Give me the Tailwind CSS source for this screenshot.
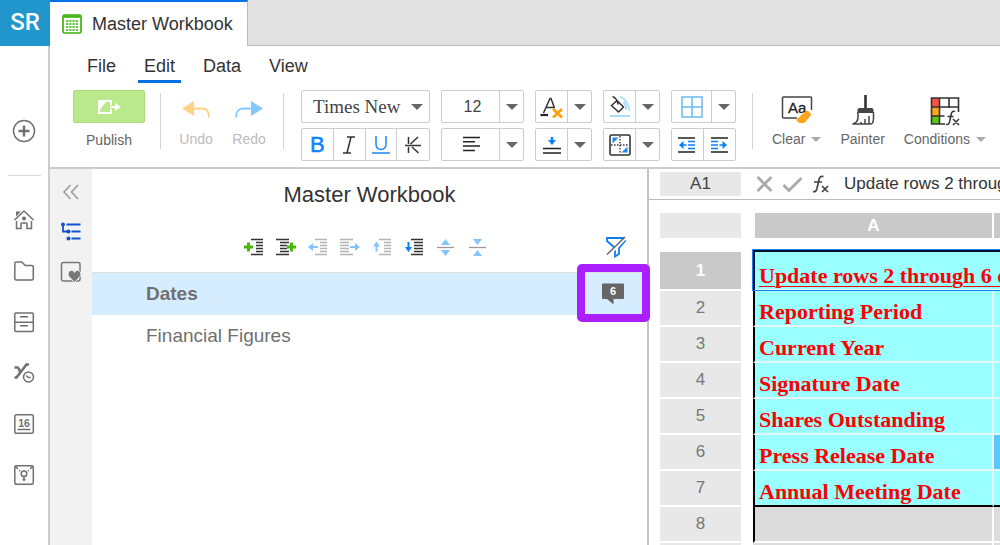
<!DOCTYPE html>
<html lang="en">
<head>
    <meta charset="utf-8">
    <meta name="viewport" content="width=device-width, initial-scale=1">
    <title>Master Workbook</title>
    <script src="https://cdn.jsdelivr.net/npm/@tailwindcss/browser@4"></script>
</head>
<body class="flex h-screen overflow-hidden bg-white font-['Liberation_Sans',Arial,sans-serif] text-[#333]">

<!-- App sidebar -->
<aside class="flex w-[50px] shrink-0 flex-col">
    <a href="#" class="flex h-[46px] shrink-0 items-center justify-center bg-[#2196cc] pb-0.5 font-['Roboto',sans-serif] text-2xl font-medium text-white">SR</a>
    <nav class="flex grow flex-col items-center border-r-2 border-[#ccc] pt-[73px] text-[#707070]">
        <button aria-label="Create">
            <svg class="size-6" viewBox="0 0 24 24" fill="none" stroke="currentColor"><circle cx="12" cy="12" r="10.5" stroke-width="1.5"/><path d="M12 6.5v11M6.5 12h11" stroke-width="2.5"/></svg>
        </button>
        <hr class="mt-8 w-[33px] border-[#d8d8d8]">
        <div class="mt-8 flex flex-col gap-[27px]">
            <button aria-label="Home">
                <svg class="size-6" viewBox="0 0 24 24" fill="none" stroke="currentColor" stroke-width="1.5"><path d="M2.500 12L12 3l9.500 9M4.500 13v7.500h4.500V16q0-1 1-1h4q1 0 1 1v4.500h4.500V13"/><path d="M4 3.500h5L4 8.500z" fill="currentColor" stroke="none"/><circle cx="12" cy="10.500" r="2" fill="currentColor" stroke="none"/></svg>
            </button>
            <button aria-label="Files">
                <svg class="size-6" viewBox="0 0 24 24" fill="none" stroke="currentColor" stroke-width="1.5"><path d="M2.800 4.500a1.500 1.500 0 0 1 1.500-1.500h5.500l3.500 3.500h6.500a1.500 1.500 0 0 1 1.500 1.500v11.500a1.500 1.500 0 0 1-1.500 1.500h-15.500a1.500 1.500 0 0 1-1.500-1.500z"/></svg>
            </button>
            <button aria-label="Archive">
                <svg class="size-6" viewBox="0 0 24 24" fill="none" stroke="currentColor" stroke-width="1.5"><rect x="2.800" y="3" width="18.500" height="18.500" rx="1"/><path d="M2.800 12.200h18.500M8 6.700h8M8 15.800h8"/></svg>
            </button>
            <button aria-label="Processes">
                <svg class="size-6" viewBox="0 0 24 24" fill="none" stroke="currentColor"><path d="M2.500 6.500h2.500q2 0 3 4.500M2.500 16.500h2L14.500 3.500h2.500" stroke-width="2.600"/><circle cx="16.500" cy="16" r="5" fill="white" stroke-width="1.500"/><path d="M14 14.500l2.500 2h2" stroke-width="1.500"/></svg>
            </button>
            <button aria-label="Calendar">
                <svg class="size-6" viewBox="0 0 24 24" fill="none" stroke="currentColor" stroke-width="1.5"><rect x="2.800" y="2.800" width="18.500" height="18.500" rx="1.500"/><path d="M5.500 17.500h13"/><text x="12" y="14.500" text-anchor="middle" font-size="10.500" font-weight="700" fill="currentColor" stroke="none">16</text></svg>
            </button>
            <button aria-label="Ideas">
                <svg class="size-6" viewBox="0 0 24 24" fill="none" stroke="currentColor" stroke-width="1.5"><rect x="2.800" y="2.800" width="18.500" height="18.500" rx="1.500"/><path d="M3 3l3 3M7.200 7.200l1 1M21 3l-3 3M16.800 7.200l-1 1M12 13.500v4.500M10.500 16.500h3"/><circle cx="12" cy="10.700" r="2.800"/></svg>
            </button>
        </div>
    </nav>
</aside>

<div class="flex min-w-0 grow flex-col">
    <!-- Document tabs -->
    <header class="flex h-[46px] shrink-0">
        <div class="flex w-[198px] items-center gap-[10px] border-t-2 border-r border-t-[#0070e8] border-r-[#bbb] pl-3">
            <svg class="h-5 w-5" viewBox="0 0 20 20"><rect x="1" y="1" width="18" height="18" rx="1.500" fill="white" stroke="#3fb40c" stroke-width="1.700"/><path d="M1 2.500h18" stroke="#3fb40c" stroke-width="2.500"/><path d="M4 7h12M4 10h12M4 13h12M4 16h12" stroke="#3fb40c" stroke-width="1.600" stroke-dasharray="2.400 .8"/></svg>
            <span class="text-lg whitespace-nowrap">Master Workbook</span>
        </div>
        <div class="grow border-b border-[#bbb] bg-[#e1e1e1]"></div>
    </header>

    <!-- Menu -->
    <nav class="flex shrink-0 gap-4 pt-[7px] pl-[31px] text-lg leading-[26px]">
        <button class="border-b-3 border-transparent px-1.5 pb-px">File</button>
        <button class="border-b-3 border-[#0070e0] px-1.5 pb-px">Edit</button>
        <button class="border-b-3 border-transparent px-1.5 pb-px">Data</button>
        <button class="border-b-3 border-transparent px-1.5 pb-px">View</button>
    </nav>

    <!-- Ribbon -->
    <div class="flex h-[86px] shrink-0 overflow-hidden border-b-2 border-[#ccc] pt-[7px] pl-[23px] text-sm text-[#666]">
        <button class="flex w-[72px] shrink-0 flex-col items-center">
            <span class="flex h-[33px] w-full items-center justify-center rounded-xs border border-[#a9dd79] bg-[#bae88d]">
                <svg class="h-4 w-6" viewBox="0 0 24 16"><rect x="2" y="2" width="12" height="12" fill="none" stroke="white" stroke-width="2"/><path d="M2 14V2h9Q4.500 6 2 14z" fill="white"/><path d="M11 8h8" stroke="#bae88d" stroke-width="4"/><path d="M13 8h6" stroke="white" stroke-width="2"/><path d="M18 4L24 8l-6 4z" fill="white"/></svg>
            </span>
            <span class="mt-[7px]">Publish</span>
        </button>
        <div class="mt-[3px] mr-[17px] ml-[15px] h-14 w-px shrink-0 bg-[#d4d4d4]"></div>
        <button disabled class="flex w-9 shrink-0 flex-col items-center text-[#bbb]">
            <svg class="mt-[10px] h-5 w-[30px]" viewBox="0 0 30 20"><path d="M13 1v15L1 8.500z" fill="#ffd285"/><path d="M12 8.500h9q7 0 7 9" fill="none" stroke="#ffd285" stroke-width="1.800"/></svg>
            <span class="mt-[9px]">Undo</span>
        </button>
        <button disabled class="ml-[17px] flex w-9 shrink-0 flex-col items-center text-[#bbb]">
            <svg class="mt-[10px] h-5 w-[30px]" viewBox="0 0 30 20"><path d="M17 1v15l12-7.500z" fill="#85c8ff"/><path d="M18 8.500H9q-7 0-7 9" fill="none" stroke="#85c8ff" stroke-width="1.800"/></svg>
            <span class="mt-[9px]">Redo</span>
        </button>
        <div class="mt-[3px] mr-[17px] ml-4 h-14 w-px shrink-0 bg-[#d4d4d4]"></div>

        <div class="grid shrink-0 auto-rows-[33px] grid-cols-[129px_83px_57px_57px_65px] gap-x-[11px] gap-y-[5px]">
            <div class="relative flex rounded-xs border border-[#ccc]">
                <select aria-label="Font" class="w-full appearance-none pl-[11px] font-['Liberation_Serif',serif] text-[19px] leading-7 text-[#444]"><option>Times New</option></select>
                <svg class="pointer-events-none absolute top-[13px] right-[6px] h-1.5 w-3" viewBox="0 0 12 6"><path d="M0 0h12L6 6z" fill="#666"/></svg>
            </div>
            <div class="flex rounded-xs border border-[#ccc]">
                <input aria-label="Font size" value="12" class="w-0 grow pl-1 text-center text-base text-[#444]">
                <button aria-label="Font sizes" class="flex w-6 items-center justify-center border-l border-[#ccc]"><svg class="h-1.5 w-3" viewBox="0 0 12 6"><path d="M0 0h12L6 6z" fill="#666"/></svg></button>
            </div>
            <div class="flex rounded-xs border border-[#ccc]">
                <button aria-label="Text color" class="flex grow items-center justify-center"><svg class="h-6 w-6" viewBox="0 0 24 24" fill="none"><path d="M3.500 18L10 3.500h1L14.500 13M6 12.500h8" stroke="#333" stroke-width="1.500"/><path d="M.500 20h7.500" stroke="#222" stroke-width="2.200"/><path d="M13 14l9 8.500M22 14l-9 8.500" stroke="#ffa011" stroke-width="2.800"/></svg></button>
                <button aria-label="Text colors" class="flex w-6 items-center justify-center border-l border-[#ccc]"><svg class="h-1.5 w-3" viewBox="0 0 12 6"><path d="M0 0h12L6 6z" fill="#666"/></svg></button>
            </div>
            <div class="flex rounded-xs border border-[#ccc]">
                <button aria-label="Fill color" class="flex grow items-center justify-center"><svg class="h-6 w-6" viewBox="0 0 24 24" fill="none"><path d="M4.500 1.500q4.500 1.500 5.500 8M9 5.500l6.500 6.500-5 5L3.500 10.500z" stroke="#333" stroke-width="1.500"/><path d="M12 1.500q8 3 9.500 14.500M15.500 7q3 3 2.500 8" stroke="#a8dcf8" stroke-width="1.800"/><path d="M2 21h20" stroke="#a8dcf8" stroke-width="2"/></svg></button>
                <button aria-label="Fill colors" class="flex w-6 items-center justify-center border-l border-[#ccc]"><svg class="h-1.5 w-3" viewBox="0 0 12 6"><path d="M0 0h12L6 6z" fill="#666"/></svg></button>
            </div>
            <div class="flex rounded-xs border border-[#ccc]">
                <button aria-label="Borders" class="flex grow items-center justify-center"><svg class="h-6 w-6" viewBox="0 0 24 24" fill="none" stroke="#67bcf5" stroke-width="1.500"><path d="M2 2h20v20H2zM12 2v20M2 12h20"/></svg></button>
                <button aria-label="Border styles" class="flex w-6 items-center justify-center border-l border-[#ccc]"><svg class="h-1.5 w-3" viewBox="0 0 12 6"><path d="M0 0h12L6 6z" fill="#666"/></svg></button>
            </div>

            <div class="grid grid-cols-4 divide-x divide-[#ccc] rounded-xs border border-[#ccc] text-[#333]">
                <button aria-label="Bold" class="text-[22px] leading-none text-[#0a84ff] [-webkit-text-stroke:0.5px_#0a84ff]">B</button>
                <button aria-label="Italic" class="flex items-center justify-center"><svg class="h-5 w-4" viewBox="0 0 16 20" fill="none" stroke="currentColor" stroke-width="1.500"><path d="M6 2h8M2 18h8M10 2L6 18"/></svg></button>
                <button aria-label="Underline" class="flex items-center justify-center text-[#1a86f5]"><svg class="h-5 w-5" viewBox="0 0 20 20" fill="none" stroke="currentColor" stroke-width="1.500"><path d="M5 1v8.500a5 5 0 0 0 10 0V1M1 18h18"/></svg></button>
                <button aria-label="Strikethrough" class="flex items-center justify-center"><svg class="h-5 w-5" viewBox="0 0 20 20" fill="none" stroke="currentColor" stroke-width="1.500"><path d="M2 10.500h16M5.500 2v7M15 2L7.500 9M5.500 12v6M9 12l6.500 6"/></svg></button>
            </div>
            <div class="flex rounded-xs border border-[#ccc]">
                <button aria-label="Align left" class="flex grow items-center justify-center"><svg class="h-5 w-5" viewBox="0 0 20 20" stroke="#222" stroke-width="1.500"><path d="M2 2.500h17M2 6.800h12M2 11h17M2 15.500h12"/></svg></button>
                <button aria-label="Alignments" class="flex w-6 items-center justify-center border-l border-[#ccc]"><svg class="h-1.5 w-3" viewBox="0 0 12 6"><path d="M0 0h12L6 6z" fill="#666"/></svg></button>
            </div>
            <div class="flex rounded-xs border border-[#ccc]">
                <button aria-label="Vertical align" class="flex grow items-center justify-center"><svg class="h-5 w-5" viewBox="0 0 20 20" fill="none"><path d="M1 13.500h18M1 18h18" stroke="#222" stroke-width="1.500"/><path d="M10 2v4" stroke="#0a80f8" stroke-width="2.500"/><path d="M6 5h8l-4 5z" fill="#0a80f8"/></svg></button>
                <button aria-label="Vertical alignments" class="flex w-6 items-center justify-center border-l border-[#ccc]"><svg class="h-1.5 w-3" viewBox="0 0 12 6"><path d="M0 0h12L6 6z" fill="#666"/></svg></button>
            </div>
            <div class="flex rounded-xs border border-[#ccc]">
                <button aria-label="Merge cells" class="flex grow items-center justify-center"><svg class="h-6 w-6" viewBox="0 0 24 24" fill="none"><rect x="2" y="2" width="20" height="20" rx="1.500" stroke="#333" stroke-width="1.600"/><path d="M12 3v18M3 12h18" stroke="#333" stroke-width="1.300" stroke-dasharray="1.500 1.500"/><path d="M4.500 4.500h6l-6 6zM19.500 19.500h-6l6-6z" fill="#1a88f5"/></svg></button>
                <button aria-label="Merge options" class="flex w-6 items-center justify-center border-l border-[#ccc]"><svg class="h-1.5 w-3" viewBox="0 0 12 6"><path d="M0 0h12L6 6z" fill="#666"/></svg></button>
            </div>
            <div class="grid grid-cols-2 divide-x divide-[#ccc] rounded-xs border border-[#ccc]">
                <button aria-label="Decrease indent" class="flex items-center justify-center"><svg class="h-5 w-5" viewBox="0 0 20 20" fill="none"><path d="M1 3h17M1 17h17" stroke="#222" stroke-width="1.500"/><path d="M11 6.500h7M11 10h7M11 13.500h7M5 10h4.500" stroke="#0a80f8" stroke-width="1.700"/><path d="M6.500 6v8L2 10z" fill="#0a80f8"/></svg></button>
                <button aria-label="Increase indent" class="flex items-center justify-center"><svg class="h-5 w-5" viewBox="0 0 20 20" fill="none"><path d="M2 3h17M2 17h17" stroke="#222" stroke-width="1.500"/><path d="M2 6.500h7M2 10h7M2 13.500h7M10.500 10h4.500" stroke="#0a80f8" stroke-width="1.700"/><path d="M13.500 6v8l4.500-4z" fill="#0a80f8"/></svg></button>
            </div>
        </div>

        <div class="mt-[3px] mr-[19px] ml-4 h-14 w-px shrink-0 bg-[#d4d4d4]"></div>
        <div class="flex shrink-0 items-start gap-[19px]">
            <button class="flex flex-col items-center">
                <svg class="mt-1 h-8 w-8" viewBox="0 0 32 32" fill="none"><path d="M16 24H2.500a1 1 0 0 1-1-1V4a1 1 0 0 1 1-1h27a1 1 0 0 1 1 1v12" stroke="#444" stroke-width="1.500"/><text x="7" y="19" font-size="15" fill="#222" stroke="#222" stroke-width=".3">Aa</text><path d="M16 25l9-8q1-1 2 0l3.500 3.500-7 8.500h-5q-4-2-2.500-4z" fill="#ffa51c"/></svg>
                <span class="mt-[3px] flex items-center gap-1.5">Clear <svg class="h-[5px] w-[10px]" viewBox="0 0 12 6"><path d="M0 0h12L6 6z" fill="#aaa"/></svg></span>
            </button>
            <button class="flex flex-col items-center">
                <svg class="mt-1 h-8 w-8" viewBox="0 0 32 32" fill="none"><path d="M18.500 1v14" stroke="#333" stroke-width="2.600"/><path d="M10.500 19v-3q0-2 2-2h12q2 0 2 2v3z" fill="#444"/><path d="M11 18v5q0 6-5.500 7h18q3 0 3-6v-6M14 30v-2M18 30v-5M22 30v-8" stroke="#444" stroke-width="1.500"/></svg>
                <span class="mt-[3px]">Painter</span>
            </button>
            <button class="flex flex-col items-center">
                <svg class="mt-1 h-8 w-8" viewBox="0 0 32 32" fill="none"><path d="M2.500 4h8v9h-8z" fill="#ff5048"/><path d="M2.500 13h8v9h-8z" fill="#ffa51c"/><path d="M2.500 22h8v8h-8z" fill="#5ac810"/><path d="M16 30H2.500V4h27v14M10.500 4v26M20 4v10M2.500 13h27M2.500 22h13" stroke="#333" stroke-width="1.600"/><path d="M17 30q3 2 4-4l1-5q1-5 4-3.500M18.500 22.500h6M24 25l6 6M30 25l-6 6" stroke="#333" stroke-width="1.500"/></svg>
                <span class="mt-[3px] flex items-center gap-1.5">Conditions <svg class="h-[5px] w-[10px]" viewBox="0 0 12 6"><path d="M0 0h12L6 6z" fill="#aaa"/></svg></span>
            </button>
        </div>
    </div>

    <div class="flex min-h-0 grow">
        <!-- Panel switcher -->
        <div class="flex w-[42px] shrink-0 flex-col items-center gap-4 bg-[#f2f2f2] pt-[11px]">
            <button aria-label="Collapse panel"><svg class="size-6" viewBox="0 0 24 24" fill="none" stroke="#999" stroke-width="1.500"><path d="M11.500 5L5 12l6.500 7M19 5l-6.500 7 6.500 7"/></svg></button>
            <button aria-label="Outline"><svg class="size-6" viewBox="0 0 24 24" fill="none" stroke="#1150d0" stroke-width="1.800"><path d="M7.500 4.500h14M12.500 11.500h9M12.500 18.500h9M4 4.500v7h4"/><g fill="#1150d0" stroke="none"><circle cx="4" cy="4.500" r="2"/><circle cx="9.500" cy="11.500" r="2"/><circle cx="9.500" cy="18.500" r="2"/></g></svg></button>
            <button aria-label="Favorites"><svg class="size-6" viewBox="0 0 24 24"><rect x="2.500" y="2.500" width="18.500" height="18.500" rx="2" fill="none" stroke="#777" stroke-width="1.500"/><path d="M15.500 22.500l-5.500-6c-2.500-3 .5-7 3.500-6q1.500.5 2 2 .5-1.500 2-2c3-1 6 3 3.500 6z" fill="#777" stroke="#f2f2f2"/></svg></button>
        </div>

        <!-- Outline -->
        <section class="flex w-[557px] shrink-0 flex-col border-r-2 border-[#c4c4c4]">
            <h1 class="pt-[11px] text-center text-[22px] leading-[30px]">Master Workbook</h1>
            <div class="mt-[25px] flex h-6 items-center pr-[19px] pl-[152px]">
                <div class="flex gap-3">
                    <button aria-label="Insert before"><svg class="size-5" viewBox="0 0 20 20" fill="none"><path d="M7 2.500h12M12 5.500h7M12 8.500h7M12 11.500h7M12 14.500h7M7 17.500h12" stroke="#333" stroke-width="1.500"/><path d="M0 10h9M4.500 5.500v9" stroke="#45b80a" stroke-width="3"/></svg></button>
                    <button aria-label="Insert after"><svg class="size-5" viewBox="0 0 20 20" fill="none"><path d="M0 2.500h13M4 5.500h9M4 8.500h7M4 11.500h7M4 14.500h9M0 17.500h13" stroke="#333" stroke-width="1.500"/><path d="M11 10h9M15.500 5.500v9" stroke="#45b80a" stroke-width="3"/></svg></button>
                    <button disabled aria-label="Promote"><svg class="size-5" viewBox="0 0 20 20" fill="none"><path d="M7 2.500h12M12 5.500h7M12 8.500h7M12 11.500h7M12 14.500h7M7 17.500h12" stroke="#b5b5b5" stroke-width="1.500"/><path d="M3 10h7" stroke="#80c5ff" stroke-width="2"/><path d="M5 6v8l-5-4z" fill="#80c5ff"/></svg></button>
                    <button disabled aria-label="Demote"><svg class="size-5" viewBox="0 0 20 20" fill="none"><path d="M0 2.500h13M0 5.500h9M0 8.500h9M0 11.500h9M0 14.500h9M0 17.500h13" stroke="#b5b5b5" stroke-width="1.500"/><path d="M10 10h7" stroke="#80c5ff" stroke-width="2"/><path d="M15 6v8l5-4z" fill="#80c5ff"/></svg></button>
                    <button disabled aria-label="Move up"><svg class="size-5" viewBox="0 0 20 20" fill="none"><path d="M7 2.500h12M12 5.500h7M12 8.500h7M12 11.500h7M12 14.500h7M7 17.500h12" stroke="#b5b5b5" stroke-width="1.500"/><path d="M4.500 8v6.500" stroke="#80c5ff" stroke-width="2"/><path d="M1 9.500h7l-3.500-5z" fill="#80c5ff"/></svg></button>
                    <button aria-label="Move down"><svg class="size-5" viewBox="0 0 20 20" fill="none"><path d="M7 2.500h12M10 5.500h9M10 8.500h9M10 11.500h9M10 14.500h9M7 17.500h12" stroke="#333" stroke-width="1.500"/><path d="M4.500 5v6" stroke="#0a80f8" stroke-width="2"/><path d="M1 10h7l-3.500 5z" fill="#0a80f8"/></svg></button>
                    <button disabled aria-label="Expand all"><svg class="size-5" viewBox="0 0 20 20"><path d="M1 10.500h17" stroke="#999" stroke-width="1.300"/><path d="M5 8h9L9.500 2zM5 13h9l-4.500 6z" fill="#80c5ff"/></svg></button>
                    <button disabled aria-label="Collapse all"><svg class="size-5" viewBox="0 0 20 20"><path d="M1 10.500h17" stroke="#999" stroke-width="1.300"/><path d="M5 2h9L9.500 8zM5 19h9l-4.500-6z" fill="#80c5ff"/></svg></button>
                </div>
                <button aria-label="Clear filter" class="ml-auto"><svg class="size-6" viewBox="0 0 24 24" fill="none"><path d="M3 3h18v3l-6 7v6l-4 2.500V13L3 6z" stroke="#0a80f0" stroke-width="1.800"/><path d="M4.500 20.500L22 2.500" stroke="white" stroke-width="2.500"/><path d="M3 19.500L21 2" stroke="#666" stroke-width="1.500"/></svg></button>
            </div>
            <ul class="mt-[13px] text-[19px] text-[#707070]">
                <li class="relative flex h-[43px] items-center justify-between border-t border-[#ddd] bg-[#d5edfe] pr-[22px] pl-[54px]">
                    <a href="#" class="font-bold">Dates</a>
                    <button aria-label="6 comments"><svg class="size-6" viewBox="0 0 24 24"><path d="M2 1.500h20q1 0 1 1V16q0 1-1 1H12.500v5.500L6 17H2q-1 0-1-1V2.500q0-1 1-1z" fill="#666"/><text x="12" y="13" text-anchor="middle" font-size="11" font-weight="700" fill="white">6</text></svg></button>
                    <span class="pointer-events-none absolute -top-[9px] -right-[3px] z-10 h-[58px] w-[73px] rounded-[5px] border-8 border-[#ab1fff]"></span>
                </li>
                <li class="flex h-[42px] items-center pl-[54px]"><a href="#">Financial Figures</a></li>
            </ul>
        </section>

        <!-- Sheet -->
        <main class="flex min-w-0 grow flex-col overflow-hidden">
            <div class="flex h-[31px] shrink-0 items-center border-b border-[#bbb] pl-[11px]">
                <input aria-label="Cell" value="A1" class="h-6 w-[81px] shrink-0 rounded-xs bg-[#e8e8e8] text-center text-[17px] text-[#444]">
                <button aria-label="Cancel" class="ml-3 shrink-0"><svg class="size-6" viewBox="0 0 24 24"><path d="M4.500 5l14 14M18.500 5l-14 14" stroke="#aaa" stroke-width="2.800"/></svg></button>
                <button aria-label="Accept" class="ml-1 shrink-0"><svg class="size-6" viewBox="0 0 24 24" fill="none"><path d="M2.500 13l5.500 5.500L20.500 6" stroke="#aaa" stroke-width="2.800"/></svg></button>
                <button aria-label="Insert function" class="ml-1 shrink-0"><svg class="size-6" viewBox="0 0 24 24" fill="none" stroke="#444" stroke-width="1.700"><path d="M4 19.500q3 1 4-3l2-9q1-4 4.500-3M5 10h8M13 14l6 6M19 14l-6 6"/></svg></button>
                <input aria-label="Formula" value="Update rows 2 through 6 only" class="ml-[11px] w-0 grow text-[17px] text-[#333]">
            </div>

            <div class="relative mt-[13px] ml-[11px] w-[500px] shrink-0">
                <table class="w-full table-fixed border-separate border-spacing-0 text-[17px] leading-[22px] text-[#777]">
                    <colgroup><col class="w-[81px]"><col class="w-3"><col class="w-[241px]"><col></colgroup>
                    <thead>
                        <tr class="h-[39px]">
                            <th class="border-b-14 border-white bg-[#e8e8e8] p-0"></th>
                            <td></td>
                            <th class="border-r-2 border-b-14 border-l-2 border-white bg-[#c9c9c9] p-0 text-white">A</th>
                            <th class="border-b-14 border-white bg-[#c9c9c9] p-0"></th>
                        </tr>
                    </thead>
                    <tbody class="[&_td]:border-b-2 [&_td]:border-[#e4f6f6] [&_td]:p-0 [&_th]:border-b-2 [&_th]:border-white [&_th]:p-0 [&_th]:font-normal">
                        <tr class="h-[39px]">
                            <th scope="row" class="bg-[#c9c9c9] font-bold! text-white">1</th><td class="border-0!"></td>
                            <td colspan="2" class="border-l-2 border-l-black! bg-[#9ff] px-1! pb-0.5! align-bottom font-['Liberation_Serif',serif] text-[22px] font-bold whitespace-nowrap text-[#f00] underline decoration-1 underline-offset-3">Update rows 2 through 6 only</td>
                        </tr>
                        <tr class="h-9">
                            <th scope="row" class="bg-[#e8e8e8]">2</th><td class="border-0!"></td>
                            <td class="border-r-2 border-l-2 border-l-black! bg-[#9ff] px-1! pb-0.5! align-bottom font-['Liberation_Serif',serif] text-[22px] font-bold text-[#f00]">Reporting Period</td><td class="bg-[#9ff]"></td>
                        </tr>
                        <tr class="h-9">
                            <th scope="row" class="bg-[#e8e8e8]">3</th><td class="border-0!"></td>
                            <td class="border-r-2 border-l-2 border-l-black! bg-[#9ff] px-1! pb-0.5! align-bottom font-['Liberation_Serif',serif] text-[22px] font-bold text-[#f00]">Current Year</td><td class="bg-[#9ff]"></td>
                        </tr>
                        <tr class="h-9">
                            <th scope="row" class="bg-[#e8e8e8]">4</th><td class="border-0!"></td>
                            <td class="border-r-2 border-l-2 border-l-black! bg-[#9ff] px-1! pb-0.5! align-bottom font-['Liberation_Serif',serif] text-[22px] font-bold text-[#f00]">Signature Date</td><td class="bg-[#9ff]"></td>
                        </tr>
                        <tr class="h-9">
                            <th scope="row" class="bg-[#e8e8e8]">5</th><td class="border-0!"></td>
                            <td class="border-r-2 border-l-2 border-l-black! bg-[#9ff] px-1! pb-0.5! align-bottom font-['Liberation_Serif',serif] text-[22px] font-bold text-[#f00]">Shares Outstanding</td><td class="bg-[#9ff]"></td>
                        </tr>
                        <tr class="h-9">
                            <th scope="row" class="bg-[#e8e8e8]">6</th><td class="border-0!"></td>
                            <td class="border-r-2 border-l-2 border-l-black! bg-[#9ff] px-1! pb-0.5! align-bottom font-['Liberation_Serif',serif] text-[22px] font-bold text-[#f00]">Press Release Date</td><td class="bg-[#5bc8ff]"></td>
                        </tr>
                        <tr class="h-9">
                            <th scope="row" class="bg-[#e8e8e8]">7</th><td class="border-0!"></td>
                            <td class="border-r-2 border-b-black! border-l-2 border-l-black! bg-[#9ff] px-1! pb-0.5! align-bottom font-['Liberation_Serif',serif] text-[22px] font-bold text-[#f00]">Annual Meeting Date</td><td class="border-b-black! bg-[#9ff]"></td>
                        </tr>
                        <tr class="h-9">
                            <th scope="row" class="bg-[#e8e8e8]">8</th><td class="border-0!"></td>
                            <td class="border-r-2 border-l-2 border-white! border-l-black! bg-[#dcdcdc]"></td><td class="border-white! bg-[#dcdcdc]"></td>
                        </tr>
                        <tr class="h-9">
                            <th class="bg-[#e8e8e8]"></th><td class="border-0!"></td>
                            <td class="border-r-2 border-white! bg-[#dcdcdc]"></td><td class="bg-[#dcdcdc]"></td>
                        </tr>
                    </tbody>
                </table>
                <!-- Selection frame of A1 -->
                <div class="pointer-events-none absolute top-9 right-0 left-[92px] h-[42px] border border-[#1a80f0]"><div class="h-full border-t-2 border-l-2 border-[#001030]"></div></div>
            </div>
        </main>
    </div>
</div>

</body>
</html>
